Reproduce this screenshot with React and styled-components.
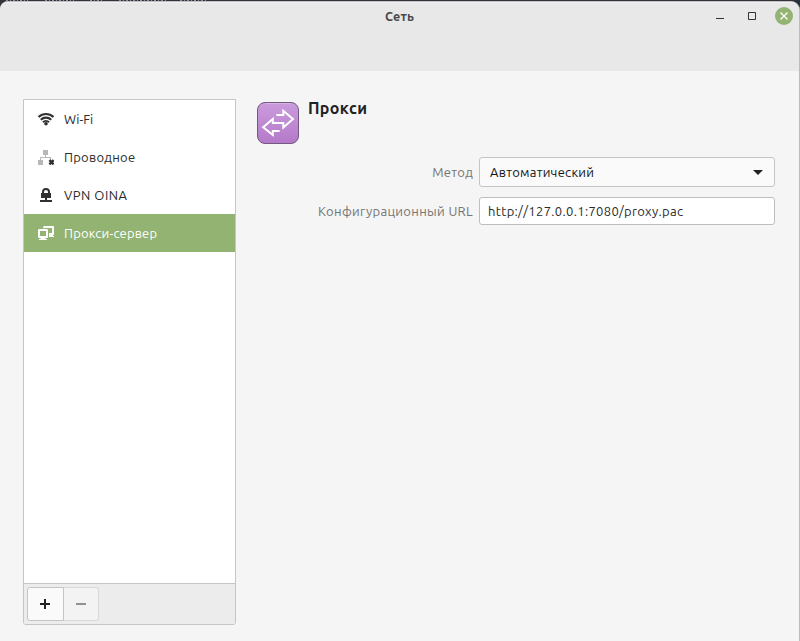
import React from "react";
import styled, { createGlobalStyle } from "styled-components";

const Global = createGlobalStyle`
  * { box-sizing: border-box; }
  body { margin: 0; background: #343339; font-family: "Ubuntu", "Noto Sans", sans-serif; font-size: 13px; color: #2b2b2b; }
  button, input { font: inherit; color: inherit; margin: 0; }
`;

const Desktop = styled.div`
  width: 800px;
  height: 641px;
  padding-top: 1px;
  overflow: hidden;
  background: #343339;
  position: relative;
`;

const Backdrop = styled.svg`
  position: absolute;
  top: 0;
  left: 0;
`;

const Window = styled.main`
  height: 640px;
  display: flex;
  flex-direction: column;
  background: #f5f5f5;
  border-top: 1px solid #c0bfc1;
  border-right: 1px solid #bcbcbc;
  border-radius: 8px 9px 0 0;
  overflow: hidden;
  position: relative;
`;

const Header = styled.header`
  height: 69px;
  flex: none;
  background: #e8e8e8;
  box-shadow: inset 0 1px #f1eff1;
  display: grid;
  grid-template-columns: 1fr auto 1fr;
  align-items: start;
`;

const Title = styled.h1`
  grid-column: 2;
  margin: 4px 0 0 0;
  font-size: 12.5px;
  line-height: 20px;
  font-weight: 700;
  color: #48484a;
  letter-spacing: ${(p) => p.$ls}px;
`;

const Controls = styled.div`
  grid-column: 3;
  justify-self: end;
  display: flex;
  padding: 5px 6px 0 0;
`;

const Control = styled.button`
  width: ${(p) => p.$w}px;
  height: 18px;
  padding: 0;
  border: 0;
  background: none;
  display: flex;
  svg { display: block; }
`;

const Content = styled.div`
  flex: 1;
  display: flex;
  gap: 21px;
  padding: 28px 24px 16px 23px;
`;

const Sidebar = styled.aside`
  width: 213px;
  display: flex;
  flex-direction: column;
  border: 1px solid #c5c5c5;
  border-radius: 0 0 3px 3px;
  background: #fff;
  overflow: hidden;
`;

const List = styled.nav`
  flex: 1;
  display: flex;
  flex-direction: column;
`;

const Item = styled.div`
  height: 38px;
  display: flex;
  align-items: center;
  gap: 10px;
  padding-left: 14px;
  color: ${(p) => (p.$active ? "#fff" : "#2b2b2b")};
  background: ${(p) => (p.$active ? "#92b372" : "transparent")};
  svg { display: block; flex: none; }
`;

const Text = styled.span`
  white-space: nowrap;
  letter-spacing: ${(p) => p.$ls || 0}px;
`;

const ListFooter = styled.footer`
  height: 41px;
  display: flex;
  padding: 3px;
  background: #ececec;
  border-top: 1px solid #c5c5c5;
`;

const ListButton = styled.button`
  width: ${(p) => (p.$first ? 37 : 35)}px;
  height: 34px;
  padding: ${(p) => (p.$first ? "0 1px 0 0" : "0")};
  display: grid;
  place-items: center;
  border: 1px solid ${(p) => (p.$first ? "#c5c5c5" : "#d8d8d8")};
  border-left-width: ${(p) => (p.$first ? 1 : 0)}px;
  border-radius: ${(p) => (p.$first ? "3px 0 0 3px" : "0 3px 3px 0")};
  background: ${(p) => (p.$first ? "#fafafa" : "#f3f3f3")};
`;

const Panel = styled.section`
  flex: 1;
`;

const PanelHead = styled.div`
  display: flex;
  gap: 9px;
  padding-top: 3px;
  height: 58px;
`;

const Heading = styled.h2`
  margin: -5px 0 0;
  font-size: 16px;
  line-height: 22px;
  font-weight: 700;
  color: #222;
  letter-spacing: ${(p) => p.$ls}px;
`;

const Form = styled.div`
  display: grid;
  grid-template-columns: 216px 296px;
  grid-template-rows: 30px 28px;
  column-gap: 6px;
  row-gap: 10px;
  align-items: center;
`;

const Label = styled.label`
  justify-self: end;
  white-space: nowrap;
  color: #747474;
  letter-spacing: ${(p) => p.$ls}px;
`;

const Select = styled.button`
  height: 30px;
  display: flex;
  align-items: center;
  justify-content: space-between;
  padding: 0 11px 0 10px;
  border: 1px solid #c5c5c5;
  border-radius: 3px;
  background: #fafafa;
  color: #151515;
`;

const Input = styled.input`
  width: 100%;
  height: 28px;
  padding: 0 8px;
  border: 1px solid #bebebe;
  border-radius: 3px;
  background: #fff;
  outline: none;
  letter-spacing: ${(p) => p.$ls}px;
`;

const Wifi = () => (
  <svg width="16" height="16" viewBox="0 0 16 16" fill="none" stroke="#303030" strokeWidth="2.1">
    <path d="M.6 6C4.7 2 11.3 2 15.4 6M2.8 8.7C5.8 5.9 10.2 5.9 13.2 8.7M5 11.2c1.7-1.7 4.3-1.7 6 0" />
    <circle cx="8" cy="12.8" r="1.8" fill="#303030" stroke="none" />
  </svg>
);

const Wired = () => (
  <svg width="16" height="16" viewBox="0 0 16 16">
    <path fill="#b8b8b8" d="M5 1h5v5H8v2h5v3h-1V9H3v2h2v5H0v-5h2V8h5V6H5z" />
    <path stroke="#303030" strokeWidth="2.4" d="m11.4 11.2 4.2 4.2m0-4.2-4.2 4.2" />
  </svg>
);

const Vpn = () => (
  <svg width="16" height="16" viewBox="0 0 16 16">
    <path fill="#303030" fillRule="evenodd" d="M4 5a4 4 0 0 1 8 0v1h1v5H9v2h5v2H2v-2h5v-2H3V6h1zm2 1h4V5a2 2 0 0 0-4 0z" />
  </svg>
);

const ProxySmall = () => (
  <svg width="16" height="16" viewBox="0 0 16 16" fill="#fff">
    <path fillRule="evenodd" d="M.7 4h8.6l.7.7v7.6l-.7.7H7.5v1H9v1H1v-1h1.5v-1H.7L0 12.3V4.7zM2 6v5h6V6z" />
    <path d="M6 1h9.5l.5.5v8l-.5.5H15v1h1v1h-5V8h3V3H7.5H7v0.2H5.2V1.7z" />
  </svg>
);

const ProxyLarge = () => (
  <svg width="42" height="42" viewBox="0 0 42 42">
    <defs>
      <linearGradient id="tile" x2="0" y2="1">
        <stop stopColor="#cb9bdc" />
        <stop offset="1" stopColor="#b479c9" />
      </linearGradient>
    </defs>
    <rect x=".5" y=".5" width="41" height="41" rx="7.5" fill="url(#tile)" stroke="#745881" />
    <path d="M8 1.5h26" stroke="#d8b4e5" />
    <path fill="none" stroke="#fff" strokeWidth="2" d="M19.3 13h7V8.8L36 17l-9.7 8.5V21H15.8v-4L6.2 25.2l9.6 7.8v-4h6.8" />
  </svg>
);

const entries = [
  { name: "Wi-Fi", Icon: Wifi, ls: 0 },
  { name: "Проводное", Icon: Wired, ls: 0.27 },
  { name: "VPN OINA", Icon: Vpn, ls: 0.5 },
  { name: "Прокси-сервер", Icon: ProxySmall, ls: 0.17, active: true },
];

export default function App() {
  return (
    <>
      <Global />
      <Desktop>
        <Backdrop width="800" height="20">
          <path d="M795 0h5v20h-5z" fill="#26323d" />
          <path d="M6 .5h22M45 .5h29M90 .5h14M119 .5h48M180 .5h27" stroke="#85909b" strokeDasharray="2 2 1 2" />
        </Backdrop>
        <Window>
          <Header>
            <Title $ls={0.2}>Сеть</Title>
            <Controls>
              <Control $w={32} aria-label="Свернуть">
                <svg width="32" height="18"><path d="M5 11.5h8" stroke="#303030" /></svg>
              </Control>
              <Control $w={32} aria-label="Развернуть">
                <svg width="32" height="18"><path d="M5.5 5.5h7v7h-7z" stroke="#303030" fill="none" /></svg>
              </Control>
              <Control $w={18} aria-label="Закрыть">
                <svg width="18" height="18">
                  <circle cx="9" cy="9" r="9" fill="#92b372" />
                  <path d="m5.5 5.5 7 7m0-7-7 7" stroke="#fff" strokeWidth="1.3" />
                </svg>
              </Control>
            </Controls>
          </Header>
          <Content>
            <Sidebar>
              <List>
                {entries.map(({ name, Icon, ls, active }) => (
                  <Item key={name} $active={active}>
                    <Icon />
                    <Text $ls={ls}>{name}</Text>
                  </Item>
                ))}
              </List>
              <ListFooter>
                <ListButton $first aria-label="Добавить">
                  <svg width="10" height="10"><path d="M0 5h10M5 0v10" stroke="#222" strokeWidth="2" /></svg>
                </ListButton>
                <ListButton disabled aria-label="Удалить">
                  <svg width="10" height="10"><path d="M0 5h10" stroke="#919191" strokeWidth="2" /></svg>
                </ListButton>
              </ListFooter>
            </Sidebar>
            <Panel>
              <PanelHead>
                <ProxyLarge />
                <Heading $ls={0.35}>Прокси</Heading>
              </PanelHead>
              <Form>
                <Label $ls={0.25}>Метод</Label>
                <Select>
                  <Text $ls={0.25}>Автоматический</Text>
                  <svg width="10" height="5"><path d="M0 0h10L5 5z" fill="#222" /></svg>
                </Select>
                <Label $ls={0.32}>Конфигурационный URL</Label>
                <Input $ls={0.33} defaultValue="http://127.0.0.1:7080/proxy.pac" />
              </Form>
            </Panel>
          </Content>
        </Window>
      </Desktop>
    </>
  );
}
